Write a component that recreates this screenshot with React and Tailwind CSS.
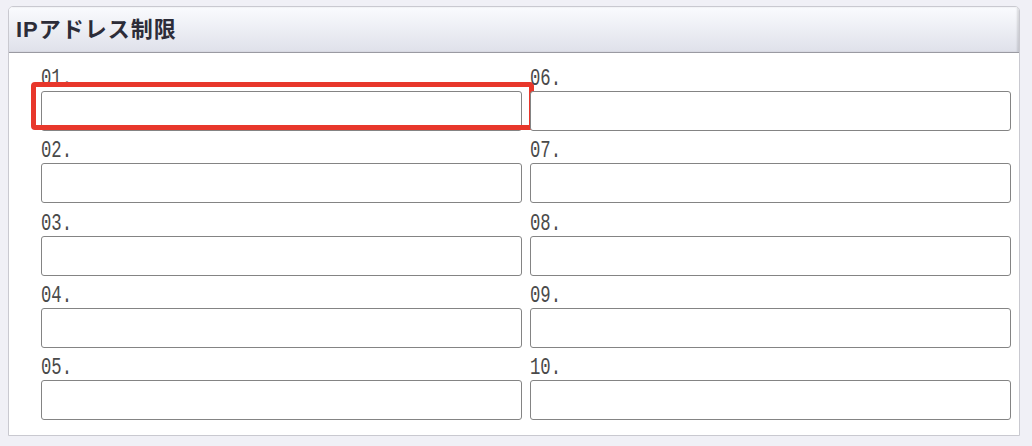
const rows = [
  ['01.', '06.'],
  ['02.', '07.'],
  ['03.', '08.'],
  ['04.', '09.'],
  ['05.', '10.'],
];

function Field({ label, highlight }) {
  return (
    <div className="relative flex flex-col">
      <div className="h-[23px] overflow-visible whitespace-nowrap">
        <span
          className="inline-block origin-left scale-x-[0.72] text-[24px] leading-[22px] text-[#4a4a4a]"
          style={{ fontFamily: '"Liberation Mono", monospace' }}
        >
          {label}
        </span>
      </div>
      <input
        type="text"
        className="h-[40px] w-full rounded-[3px] border-[1.5px] border-[#848484] bg-white px-2 outline-none"
      />
      {highlight && (
        <div className="pointer-events-none absolute left-[-10px] top-[14px] h-[48px] w-[503px] rounded-[4px] border-[5px] border-[#e8372b]" />
      )}
    </div>
  );
}

export default function App() {
  return (
    <div
      className="h-[446px] w-[1032px] bg-[#f0f0f6] pl-[8px] pt-[6px]"
      style={{ fontFamily: '"Liberation Sans", "Noto Sans CJK JP", sans-serif' }}
    >
      <div className="w-[1012px] overflow-hidden rounded-t-[5px] border border-[#c9c9d0] bg-white">
        <div className="flex h-[46px] items-center border-b border-[#9a9aa2] bg-gradient-to-b from-[#fafbfe] to-[#dfe1ea] pl-[7px] shadow-[inset_-2px_0_2px_rgba(0,0,0,0.12)]">
          <h2 className="text-[22px] font-bold tracking-[1px] text-[#2c2c38]">IPアドレス制限</h2>
        </div>
        <div className="grid grid-cols-2 gap-x-[8px] gap-y-[9.25px] pb-[15px] pl-[32px] pr-[8px] pt-[15px]">
          {rows.map(([a, b], i) => (
            <div key={a} className="contents">
              <Field label={a} highlight={i === 0} />
              <Field label={b} />
            </div>
          ))}
        </div>
      </div>
    </div>
  );
}
